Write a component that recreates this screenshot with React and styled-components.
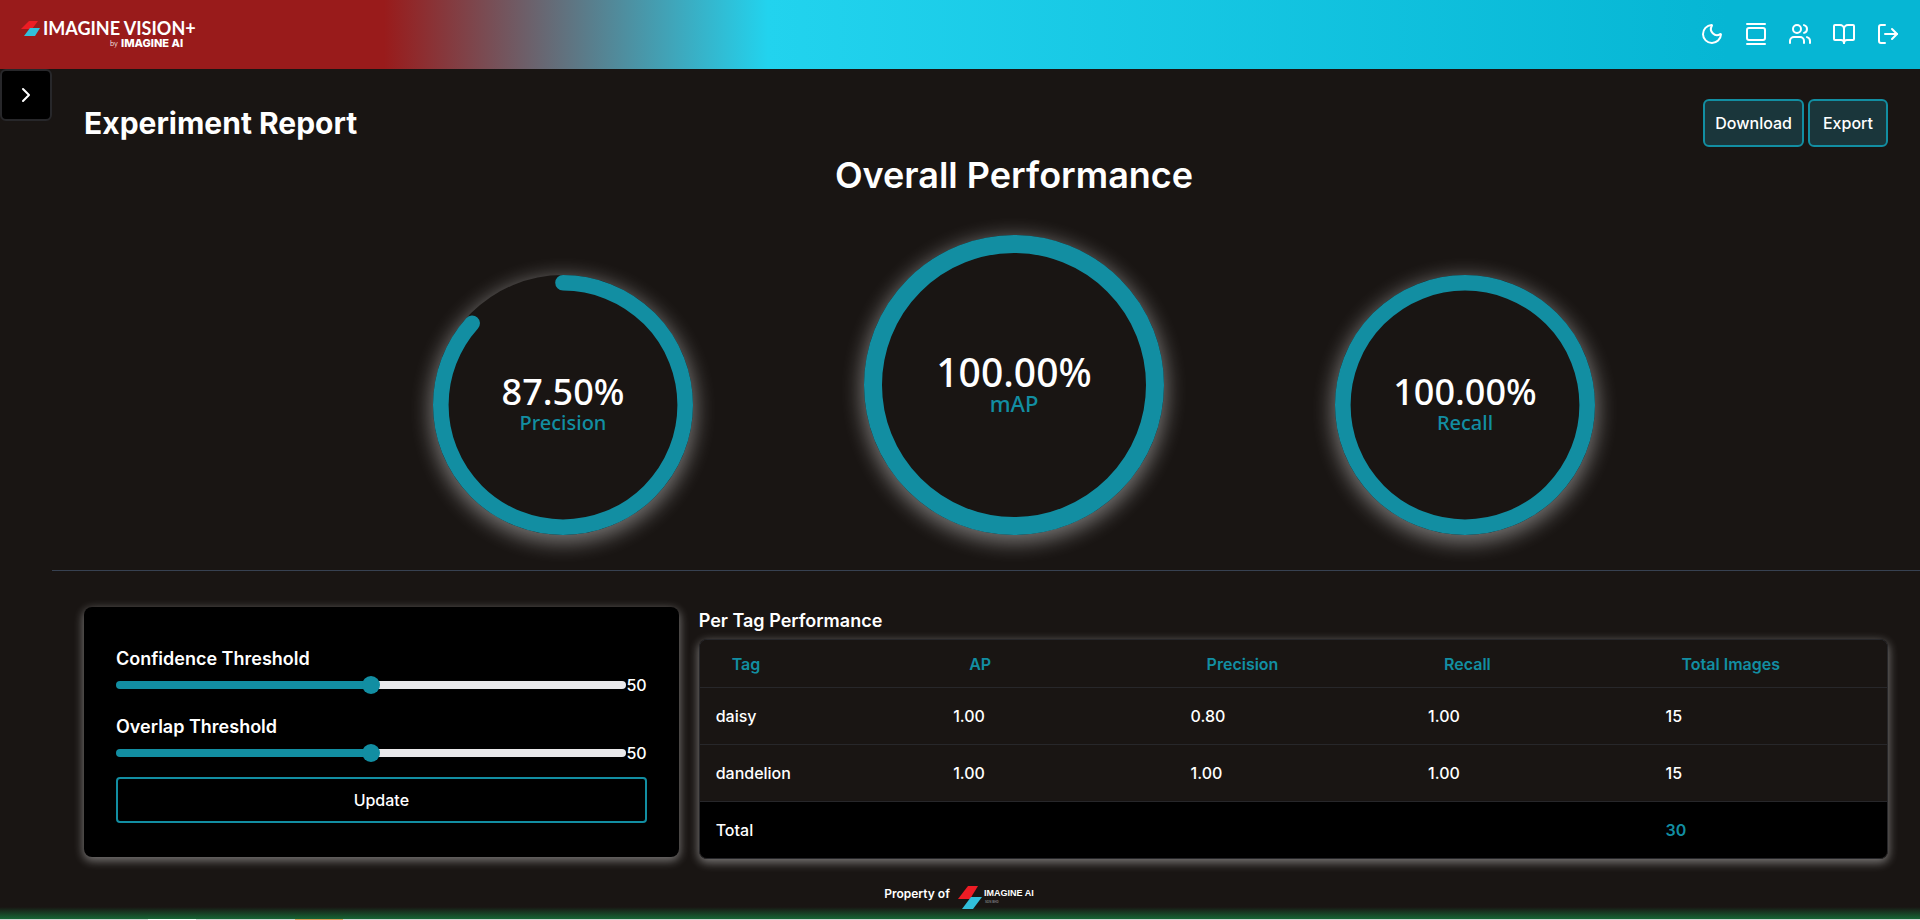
import React, { useState } from "react";
import styled, { createGlobalStyle } from "styled-components";
import { Moon, GalleryVertical, Users, BookOpen, LogOut, ChevronRight } from "lucide-react";

const TEAL = "#128ea2";

const GlobalStyle = createGlobalStyle`
  *, *::before, *::after { box-sizing: border-box; }
  body {
    margin: 0;
    background: #191513;
    color: #fff;
    font-family: Inter, "Liberation Sans", sans-serif;
    font-size: 16px;
    line-height: 24px;
    font-weight: 500;
  }
  h1, h2, h3, p { margin: 0; }
  button, input { font: inherit; color: inherit; }
`;

const Page = styled.div`
  display: flex;
  flex-direction: column;
  min-height: 100vh;
`;

const Header = styled.header`
  display: flex;
  align-items: center;
  justify-content: space-between;
  height: 69px;
  padding: 0 20px 2px;
  background: linear-gradient(to right, #991b1b 20%, #22d3ee 40%, #06b6d4 90%);
`;

const HomeLink = styled.a`
  display: block;
  line-height: 0;
  color: #fff;
`;

const Toolbar = styled.nav`
  display: flex;
  gap: 20px;
`;

const ToolButton = styled.button`
  display: flex;
  padding: 0;
  border: 0;
  background: none;
  cursor: pointer;
`;

const Body = styled.div`
  display: flex;
  flex: 1;
`;

const Sidebar = styled.aside`
  flex: 0 0 52px;
`;

const SidebarToggle = styled.button`
  display: flex;
  align-items: center;
  justify-content: center;
  width: 52px;
  height: 52px;
  padding: 0;
  border: 2px solid #27272a;
  border-radius: 6px;
  background: #000;
`;

const Main = styled.main`
  flex: 1;
  min-width: 0;
`;

const TitleRow = styled.div`
  display: flex;
  align-items: center;
  justify-content: space-between;
  padding: 30px 32px 0;
`;

const Title = styled.h1`
  font-size: 30px;
  line-height: 36px;
  font-weight: 700;
`;

const Actions = styled.div`
  display: flex;
  gap: 4px;
`;

const ActionButton = styled.button`
  height: 48px;
  padding: 0 ${(p) => p.$pad}px;
  border: 2px solid ${TEAL};
  border-radius: 6px;
  background: #1a363b;
`;

const Overview = styled.section`
  display: flex;
  flex-direction: column;
  align-items: center;
  padding: 8px 32px 35px 88px;
  border-bottom: 1px solid #374151;
`;

const OverviewTitle = styled.h2`
  font-size: 36px;
  line-height: 40px;
  font-weight: 600;
`;

const Gauges = styled.div`
  display: grid;
  grid-template-columns: repeat(3, 1fr);
  align-items: end;
  justify-items: center;
  width: 100%;
  max-width: 1353px;
  margin-top: 40px;
`;

const GaugeBox = styled.div`
  display: grid;
  place-items: center;
  width: ${(p) => p.$size}px;
  height: ${(p) => p.$size}px;
  border-radius: 50%;
  box-shadow: 0 5px 20px 3px rgba(255, 255, 255, 0.4);
  background: #191513;

  > * { grid-area: 1 / 1; }
`;

const GaugeText = styled.div`
  display: flex;
  flex-direction: column;
  align-items: center;
  font-family: "Noto Sans", "Open Sans", sans-serif;
`;

const GaugeValue = styled.span`
  font-size: ${(p) => (p.$large ? 39 : 36)}px;
  line-height: 36px;
`;

const GaugeName = styled.span`
  font-size: ${(p) => (p.$large ? 22 : 20)}px;
  line-height: 26px;
  color: ${TEAL};
`;

const Details = styled.div`
  display: grid;
  grid-template-columns: 1fr 2fr;
  gap: 20px;
  padding: 36px 32px 0;
`;

const Panel = styled.form`
  height: 250px;
  padding: 38px 32px 0;
  border-radius: 8px;
  background: #000;
  box-shadow: 0 3px 10px 1px rgba(255, 255, 255, 0.4);
`;

const Fields = styled.div`
  display: flex;
  flex-direction: column;
  gap: 16px;
  margin-bottom: 12px;
`;

const Field = styled.div`
  display: flex;
  flex-direction: column;
`;

const FieldLabel = styled.label`
  font-size: 18px;
  line-height: 28px;
  font-weight: 600;
`;

const SliderRow = styled.div`
  display: flex;
  align-items: center;
  height: 24px;
`;

const Slider = styled.input`
  flex: 1;
  min-width: 0;
  height: 18px;
  margin: 0;
  appearance: none;
  background: transparent;

  &::-webkit-slider-runnable-track {
    height: 8px;
    border-radius: 4px;
    background: linear-gradient(to right, ${TEAL} ${(p) => p.value}%, #e9e9eb ${(p) => p.value}%);
  }

  &::-webkit-slider-thumb {
    appearance: none;
    width: 18px;
    height: 18px;
    margin-top: -5px;
    border-radius: 50%;
    background: ${TEAL};
  }
`;

const UpdateButton = styled.button`
  width: 100%;
  height: 46px;
  border: 2px solid ${TEAL};
  border-radius: 4px;
  background: #000;
`;

const TagTitle = styled.h3`
  font-size: 18px;
  line-height: 28px;
  font-weight: 600;
  margin-bottom: 4px;
`;

const TableFrame = styled.div`
  overflow: hidden;
  border: 1px solid #27272a;
  border-radius: 8px;
  box-shadow: 0 3px 10px 1px rgba(255, 255, 255, 0.4);
`;

const Table = styled.table`
  width: 100%;
  table-layout: fixed;
  border-collapse: separate;
  border-spacing: 0;
  background: #191513;
`;

const HeadCell = styled.th`
  height: 48px;
  padding: 0 32px;
  border-bottom: 1px solid #27272a;
  text-align: left;
  font-weight: 600;
  color: ${TEAL};
`;

const Cell = styled.td`
  height: 57px;
  padding: 0 16px;
  border-bottom: 1px solid #27272a;
`;

const TotalCell = styled.td`
  height: 56px;
  padding: 0 16px;
  background: #000;
`;

const TotalValue = styled.strong`
  font-weight: 600;
  color: ${TEAL};
`;

const Footer = styled.footer`
  display: flex;
  justify-content: center;
  gap: 8px;
  height: 34px;
  font-size: 12px;
  line-height: 18px;
  font-weight: 600;
  background: linear-gradient(to top, #166534, rgba(22, 101, 52, 0)) bottom / 100% 12px no-repeat;
`;

const BottomBar = styled.div`
  height: 1px;
  background: linear-gradient(to right, #d4d4d4 148px, #fff 148px 196px, #d4d4d4 196px 295px, #d9a05b 295px 343px, #d4d4d4 343px);
`;

function VisionLogo() {
  return (
    <svg width="180" height="32" viewBox="0 0 180 32" role="img" aria-label="Imagine Vision+ by Imagine AI">
      <path d="M9 3h9l-6 8H1z" fill="#ed1c24" />
      <path d="M10 10h10l-5 8H4z" fill="#31bfdb" />
      <g fill="#fff">
        <text x="23" y="17" fontFamily="Lato, sans-serif" fontWeight="700" fontSize="18">IMAGINE VISION+</text>
        <text x="90" y="28" fontFamily="Inter, sans-serif" fontWeight="300" fontSize="7">by</text>
        <text x="101" y="29" fontFamily="Inter, sans-serif" fontWeight="800" fontSize="11">IMAGINE AI</text>
      </g>
    </svg>
  );
}

function CompanyLogo() {
  return (
    <svg width="78" height="26" viewBox="0 0 78 26" role="img" aria-label="Imagine AI">
      <path d="M10 1h10l-8 13H0z" fill="#ed1c24" />
      <path d="M13 12h11l-9 12H4z" fill="#31bfdb" />
      <text x="26" y="11" fontFamily="Liberation Sans, sans-serif" fontWeight="700" fontSize="9" fill="#fff">IMAGINE AI</text>
      <text x="27" y="18" fontFamily="Liberation Sans, sans-serif" fontWeight="700" fontSize="3" fill="#777">SDN BHD</text>
    </svg>
  );
}

function Gauge({ size, value, name, large }) {
  const stroke = size * 0.06;
  const radius = (size - stroke) / 2;
  const length = 2 * Math.PI * radius;
  // An unfinished ring stops a little early to leave room for its round cap.
  const filled = value < 100 ? (length * value * 0.99) / 100 : length;
  return (
    <GaugeBox $size={size}>
      <svg width={size} height={size} aria-hidden="true">
        <circle
          cx={size / 2}
          cy={size / 2}
          r={radius}
          fill="none"
          stroke={TEAL}
          strokeWidth={stroke}
          strokeLinecap="round"
          strokeDasharray={`${filled} ${length}`}
          transform={`rotate(-90 ${size / 2} ${size / 2})`}
        />
      </svg>
      <GaugeText>
        <GaugeValue $large={large}>{value.toFixed(2)}%</GaugeValue>
        <GaugeName $large={large}>{name}</GaugeName>
      </GaugeText>
    </GaugeBox>
  );
}

function ThresholdField({ id, label }) {
  const [value, setValue] = useState(50);
  return (
    <Field>
      <FieldLabel htmlFor={id}>{label}</FieldLabel>
      <SliderRow>
        <Slider id={id} type="range" min="0" max="100" value={value} onChange={(e) => setValue(e.target.value)} />
        <output htmlFor={id}>{value}</output>
      </SliderRow>
    </Field>
  );
}

const tools = [
  ["Dark mode", Moon],
  ["Gallery", GalleryVertical],
  ["Users", Users],
  ["Documentation", BookOpen],
  ["Log out", LogOut],
];

const rows = [
  ["daisy", "1.00", "0.80", "1.00", "15"],
  ["dandelion", "1.00", "1.00", "1.00", "15"],
];

export default function App() {
  return (
    <Page>
      <GlobalStyle />
      <Header>
        <HomeLink href="#">
          <VisionLogo />
        </HomeLink>
        <Toolbar>
          {tools.map(([label, Icon]) => (
            <ToolButton key={label} type="button" aria-label={label}>
              <Icon size={24} />
            </ToolButton>
          ))}
        </Toolbar>
      </Header>
      <Body>
        <Sidebar>
          <SidebarToggle type="button" aria-label="Open sidebar">
            <ChevronRight size={24} />
          </SidebarToggle>
        </Sidebar>
        <Main>
          <TitleRow>
            <Title>Experiment Report</Title>
            <Actions>
              <ActionButton type="button" $pad={10}>Download</ActionButton>
              <ActionButton type="button" $pad={13}>Export</ActionButton>
            </Actions>
          </TitleRow>
          <Overview>
            <OverviewTitle>Overall Performance</OverviewTitle>
            <Gauges>
              <Gauge size={260} value={87.5} name="Precision" />
              <Gauge size={300} value={100} name="mAP" large />
              <Gauge size={260} value={100} name="Recall" />
            </Gauges>
          </Overview>
          <Details>
            <Panel onSubmit={(e) => e.preventDefault()}>
              <Fields>
                <ThresholdField id="confidence" label="Confidence Threshold" />
                <ThresholdField id="overlap" label="Overlap Threshold" />
              </Fields>
              <UpdateButton type="submit">Update</UpdateButton>
            </Panel>
            <section>
              <TagTitle>Per Tag Performance</TagTitle>
              <TableFrame>
                <Table>
                  <thead>
                    <tr>
                      {["Tag", "AP", "Precision", "Recall", "Total Images"].map((h) => (
                        <HeadCell key={h} scope="col">{h}</HeadCell>
                      ))}
                    </tr>
                  </thead>
                  <tbody>
                    {rows.map((row) => (
                      <tr key={row[0]}>
                        {row.map((cell, i) => (
                          <Cell key={i}>{cell}</Cell>
                        ))}
                      </tr>
                    ))}
                  </tbody>
                  <tfoot>
                    <tr>
                      <TotalCell colSpan={4}>Total</TotalCell>
                      <TotalCell><TotalValue>30</TotalValue></TotalCell>
                    </tr>
                  </tfoot>
                </Table>
              </TableFrame>
            </section>
          </Details>
        </Main>
      </Body>
      <Footer>
        <span>Property of</span>
        <CompanyLogo />
      </Footer>
      <BottomBar />
    </Page>
  );
}
